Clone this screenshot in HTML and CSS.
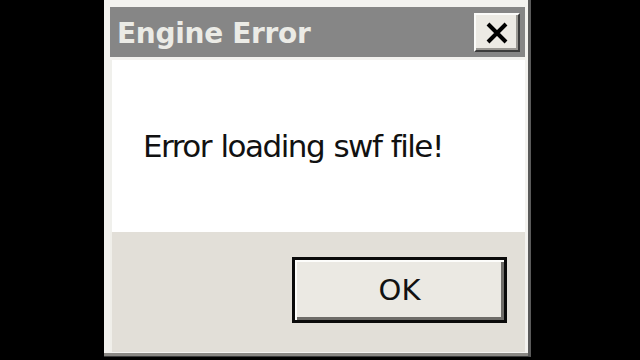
FILE: index.html
```html
<!DOCTYPE html>
<html>
<head>
<meta charset="utf-8">
<link rel="stylesheet" href="styles.css">
</head>
<body>
<div class="dialog">
  <div class="titlebar">
    <span class="title">Engine Error</span>
    <button class="close" aria-label="Close">
      <svg width="24" height="22" viewBox="0 0 24 22"><path d="M3 2 L21 20 M21 2 L3 20" stroke="#000" stroke-width="4" fill="none"/></svg>
    </button>
  </div>
  <div class="content">
    <p class="message">Error loading swf file!</p>
  </div>
  <div class="footer">
    <button class="ok">OK</button>
  </div>
</div>
</body>
</html>
```
FILE: styles.css
```css
html, body {
  margin: 0;
  padding: 0;
  background: #000;
  width: 640px;
  height: 360px;
  overflow: hidden;
}
body {
  display: flex;
  padding-left: 104px;
  box-sizing: border-box;
}
.dialog {
  width: 427px;
  height: 357px;
  box-sizing: border-box;
  display: flex;
  flex-direction: column;
  background: #f3f2ef;
  padding: 7px 3px 4px 6px;
  border-right: 3px solid #5a5a5a;
  border-bottom: 1px solid #3a3a3a;
  box-shadow: inset 0 -3px 0 #8a8884;
  font-family: "DejaVu Sans", Verdana, sans-serif;
}
.titlebar {
  height: 50px;
  background: #868686;
  display: flex;
  align-items: center;
  justify-content: space-between;
  padding: 0 5px 0 7px;
  flex: none;
}
.title {
  color: #ebebe6;
  font-weight: bold;
  font-size: 28px;
  letter-spacing: -0.3px;
  margin-top: 2px;
}
.close {
  width: 46px;
  height: 39px;
  padding: 0;
  margin: 0;
  background: #eceae4;
  border: 2px solid;
  border-color: #fbfbf9 #3c3c3c #3c3c3c #fbfbf9;
  box-shadow: inset -2px -2px 0 #9a9893;
  display: flex;
  align-items: center;
  justify-content: center;
  margin-top: 1px;
}
.content {
  height: 172px;
  margin-top: 3px;
  background: #fff;
  border-left: 2px solid #f0f0ec;
  flex: none;
  display: flex;
  align-items: flex-start;
  padding-left: 31px;
}
.message {
  margin: 68px 0 0 0;
  font-size: 31px;
  color: #111;
  letter-spacing: -1.5px;
  word-spacing: 1px;
}
.footer {
  flex: 1;
  background: #e2dfd8;
  border-left: 2px solid #f0efea;
  display: flex;
  justify-content: flex-end;
  align-items: flex-start;
  padding: 25px 18px 0 0;
}
.ok {
  width: 215px;
  height: 66px;
  box-sizing: border-box;
  background: #ebe9e3;
  border: 3px solid #0a0a0a;
  box-shadow: inset 2px 2px 0 #fdfdfb, inset -3px -3px 0 #6e6c68;
  font-family: "DejaVu Sans", Verdana, sans-serif;
  font-size: 29px;
  color: #111;
  padding: 0;
}
```
